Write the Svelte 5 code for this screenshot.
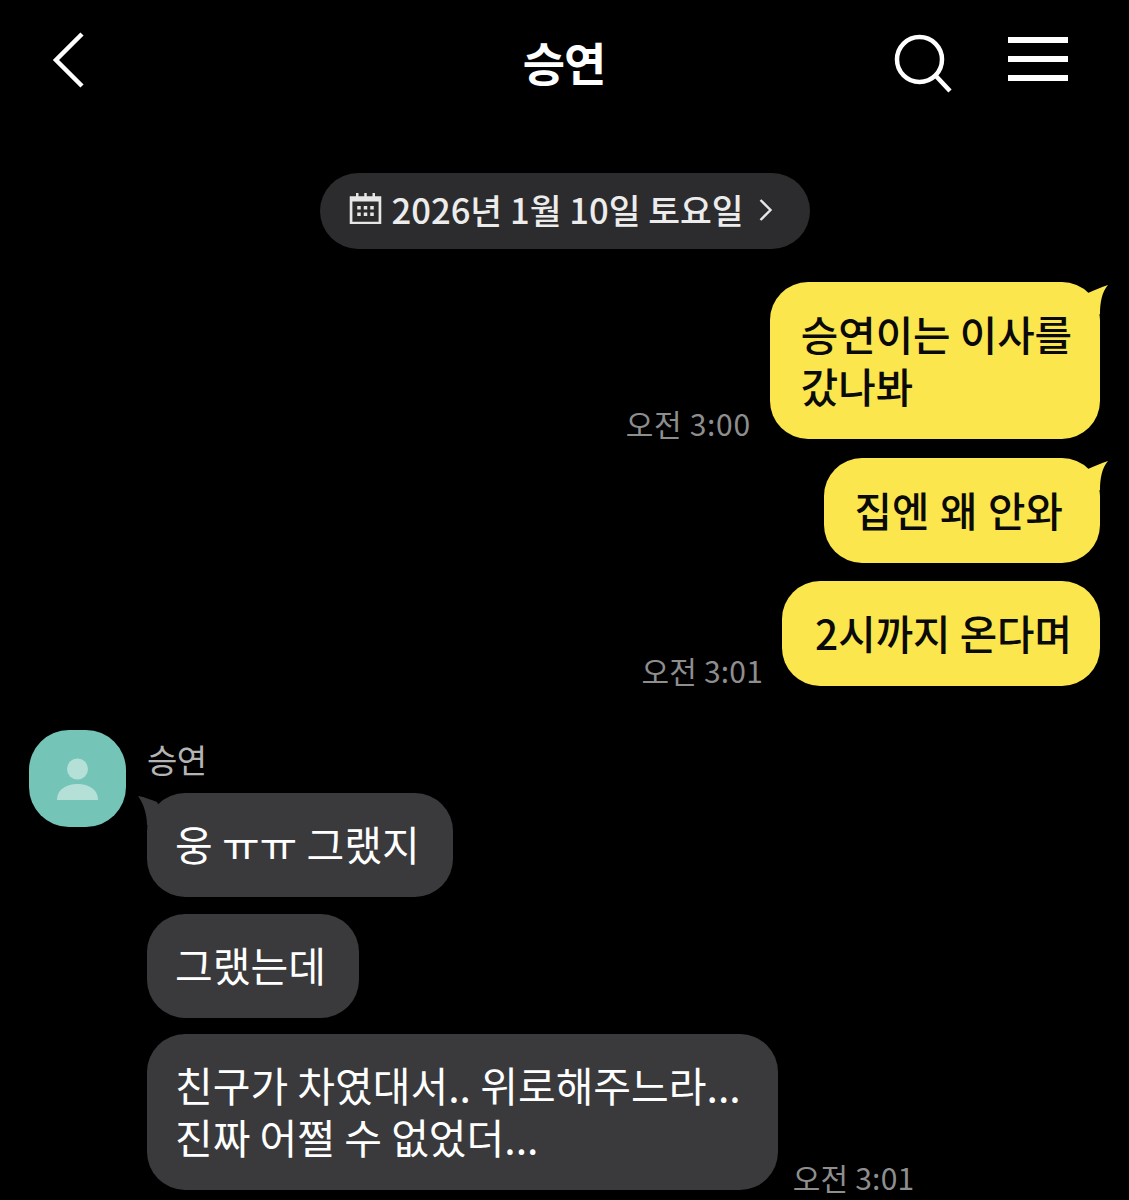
<script lang="ts">
  type Msg = { text: string[]; time?: string; tail?: boolean };

  const sent: Msg[] = [
    { text: ['승연이는 이사를', '갔나봐'], time: '오전 3:00', tail: true },
    { text: ['집엔 왜 안와'], tail: true },
    { text: ['2시까지 온다며'], time: '오전 3:01' }
  ];
  const received: Msg[] = [
    { text: ['웅 ㅠㅠ 그랬지'], tail: true },
    { text: ['그랬는데'] },
    { text: ['친구가 차였대서.. 위로해주느라...', '진짜 어쩔 수 없었더...'], time: '오전 3:01' }
  ];
</script>

<div class="screen">
  <header class="top">
    <svg class="back" width="36" height="60" viewBox="0 0 36 60" fill="none" stroke="#fff" stroke-width="4.5">
      <path d="M32 4 L6 30 L32 56" />
    </svg>
    <div class="title">승연</div>
    <div class="actions">
      <svg class="search" width="60" height="60" viewBox="0 0 60 60" fill="none" stroke="#fff" stroke-width="4.5">
        <circle cx="25.5" cy="25.5" r="22.5" />
        <path d="M41 41 L56 57" />
      </svg>
      <div class="menu"><span></span><span></span><span></span></div>
    </div>
  </header>

  <div class="date-row">
    <div class="date">
      <svg class="cal" width="33" height="32" viewBox="0 0 32 32" fill="none" preserveAspectRatio="none">
        <path d="M2 5.5H30V31H2Z" stroke="#e6e6e6" stroke-width="2.6" />
        <path d="M2 5.5H30V9.5H2Z" fill="#e6e6e6" />
        <path d="M8 1V6M16 1V6M24 1V6" stroke="#e6e6e6" stroke-width="2.4" />
        <path d="M8 14h3.4v3.4H8zM14.3 14h3.4v3.4h-3.4zM20.6 14H24v3.4h-3.4zM8 20.6h3.4V24H8zM14.3 20.6h3.4V24h-3.4zM20.6 20.6H24V24h-3.4z" fill="#e6e6e6" />
      </svg>
      <span class="date-text">2026년 1월 10일 토요일</span>
      <svg class="chev" width="16" height="26" viewBox="0 0 16 26" fill="none" stroke="#e6e6e6" stroke-width="2.4">
        <path d="M2.5 3 L12.5 13 L2.5 23" />
      </svg>
    </div>
  </div>

  <section class="sent">
    {#each sent as m}
      <div class="row">
        {#if m.time}<time>{m.time}</time>{/if}
        <div class="bubble me">
          {#each m.text as line}<div>{line}</div>{/each}
          {#if m.tail}
            <svg class="tail tail-me" width="40" height="32" viewBox="0 0 40 32">
              <path d="M19 11 C26 8 32 5 39 3 C33 10 31 20 31 32 L10 32 Z" fill="#fbe64d" />
            </svg>
          {/if}
        </div>
      </div>
    {/each}
  </section>

  <section class="received">
    <div class="avatar">
      <svg width="97" height="97" viewBox="0 0 97 97">
        <circle cx="48.5" cy="39" r="10.5" fill="#b4e0d8" />
        <path d="M28 70 C28 59 38 54 48.5 54 C59 54 69 59 69 70 Z" fill="#b4e0d8" />
      </svg>
    </div>
    <div class="thread">
      <div class="name">승연</div>
      {#each received as m}
        <div class="row">
          <div class="bubble you">
            {#each m.text as line}<div>{line}</div>{/each}
            {#if m.tail}
              <svg class="tail tail-you" width="40" height="32" viewBox="0 0 40 32">
                <path d="M0 3 C7 4 13 7 19 9 L30 32 L9 32 C9 20 5 10 0 3 Z" fill="#3a3a3c" />
              </svg>
            {/if}
          </div>
          {#if m.time}<time>{m.time}</time>{/if}
        </div>
      {/each}
    </div>
  </section>
</div>

<style>
  :global(body) {
    background: #000;
  }
  .screen {
    width: 1129px;
    height: 1200px;
    overflow: hidden;
    background: #000;
    color: #fff;
    font-family: "Noto Sans CJK KR", "Noto Sans", sans-serif;
  }

  .top {
    height: 126px;
    display: grid;
    grid-template-columns: 1fr auto 1fr;
    align-items: center;
    padding: 0 61px 0 50px;
    box-sizing: border-box;
  }
  .back {
    margin-top: -6px;
  }
  .title {
    font-size: 46px;
    font-weight: 700;
    line-height: 1;
    letter-spacing: -1px;
    margin: -4px 0 0 10px;
  }
  .actions {
    display: flex;
    justify-content: flex-end;
    align-items: center;
  }
  .search {
    margin: 1px 54px 0 0;
  }
  .menu {
    width: 60px;
    height: 44px;
    margin-top: -8px;
    display: flex;
    flex-direction: column;
    justify-content: space-between;
  }
  .menu span {
    height: 6px;
    background: #fff;
  }

  .date-row {
    display: flex;
    justify-content: center;
    margin-top: 47px;
  }
  .date {
    width: 490px;
    height: 76px;
    box-sizing: border-box;
    padding-left: 29px;
    border-radius: 38px;
    background: #2c2c2e;
    color: #ececec;
    display: flex;
    align-items: center;
    gap: 10px;
    font-size: 34.6px;
    font-weight: 500;
  }
  .date-text {
    margin-top: -4px;
  }
  .cal {
    margin-top: -6px;
  }
  .chev {
    margin-left: 4px;
    margin-top: -2px;
  }

  .sent {
    margin-top: 33px;
    display: flex;
    flex-direction: column;
    gap: 18.5px;
    padding-right: 29px;
  }
  .row {
    display: flex;
    align-items: flex-end;
  }
  .sent .row {
    justify-content: flex-end;
  }
  time {
    font-size: 30px;
    line-height: 34px;
    color: #8e8e8e;
    white-space: nowrap;
    letter-spacing: 0.7px;
  }
  .row:last-child time {
    letter-spacing: 0.2px;
  }
  .sent time {
    margin: 0 19px -1px 0;
  }

  .bubble {
    position: relative;
    border-radius: 38px;
    line-height: 52px;
    white-space: nowrap;
  }
  .me {
    padding: 26px 28px 27px 31px;
    background: #fbe64d;
    color: #0a0a0a;
    font-size: 40.7px;
    font-weight: 500;
  }
  .sent .row:nth-child(2) .me {
    padding-right: 37px;
    word-spacing: 1.5px;
  }
  .sent .row:nth-child(3) .me {
    padding-left: 33px;
  }
  .you {
    padding: 24px 33px 28px 28px;
    background: #3a3a3c;
    color: #fff;
    font-size: 41px;
  }
  .thread .row:last-child .you {
    padding-right: 37px;
  }
  .tail {
    position: absolute;
    top: 0;
  }
  .tail-me {
    right: -9px;
  }
  .tail-you {
    left: -9px;
  }

  .received {
    margin-top: 44px;
    display: flex;
    padding-left: 29px;
    gap: 21px;
    align-items: flex-start;
  }
  .avatar {
    width: 97px;
    height: 97px;
    flex: none;
    border-radius: 40px;
    background: #74c5b7;
  }
  .thread {
    display: flex;
    flex-direction: column;
    gap: 16.5px;
  }
  .name {
    font-size: 33px;
    line-height: 44px;
    color: #b4b4b4;
    margin: 7px 0 -4.5px;
    letter-spacing: -0.5px;
  }
  .thread time {
    margin: 0 0 -4px 15px;
  }
</style>
